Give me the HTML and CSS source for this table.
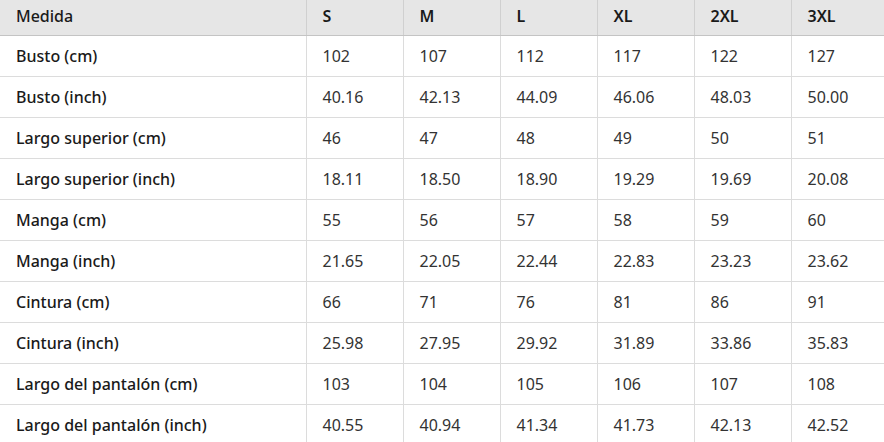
FILE: index.html
```html
<!DOCTYPE html>
<html lang="es">
<head>
<meta charset="utf-8">
<link rel="stylesheet" href="styles.css">
</head>
<body>
<table class="size-table">
  <colgroup>
    <col class="col-label">
    <col class="col-size"><col class="col-size"><col class="col-size"><col class="col-size"><col class="col-size"><col class="col-last">
  </colgroup>
  <thead>
    <tr><th class="head-label">Medida</th><th>S</th><th>M</th><th>L</th><th>XL</th><th>2XL</th><th>3XL</th></tr>
  </thead>
  <tbody>
    <tr><th>Busto (cm)</th><td>102</td><td>107</td><td>112</td><td>117</td><td>122</td><td>127</td></tr>
    <tr><th>Busto (inch)</th><td>40.16</td><td>42.13</td><td>44.09</td><td>46.06</td><td>48.03</td><td>50.00</td></tr>
    <tr><th>Largo superior (cm)</th><td>46</td><td>47</td><td>48</td><td>49</td><td>50</td><td>51</td></tr>
    <tr><th>Largo superior (inch)</th><td>18.11</td><td>18.50</td><td>18.90</td><td>19.29</td><td>19.69</td><td>20.08</td></tr>
    <tr><th>Manga (cm)</th><td>55</td><td>56</td><td>57</td><td>58</td><td>59</td><td>60</td></tr>
    <tr><th>Manga (inch)</th><td>21.65</td><td>22.05</td><td>22.44</td><td>22.83</td><td>23.23</td><td>23.62</td></tr>
    <tr><th>Cintura (cm)</th><td>66</td><td>71</td><td>76</td><td>81</td><td>86</td><td>91</td></tr>
    <tr><th>Cintura (inch)</th><td>25.98</td><td>27.95</td><td>29.92</td><td>31.89</td><td>33.86</td><td>35.83</td></tr>
    <tr><th>Largo del pantalón (cm)</th><td>103</td><td>104</td><td>105</td><td>106</td><td>107</td><td>108</td></tr>
    <tr><th>Largo del pantalón (inch)</th><td>40.55</td><td>40.94</td><td>41.34</td><td>41.73</td><td>42.13</td><td>42.52</td></tr>
  </tbody>
</table>
</body>
</html>
```
FILE: styles.css
```css
html, body {
  margin: 0;
  padding: 0;
  background: #ffffff;
  overflow: hidden;
}
.size-table {
  border-collapse: collapse;
  table-layout: fixed;
  width: 884px;
  font-family: "Noto Sans", "Open Sans", sans-serif;
  font-size: 16px;
  color: #333;
}
.col-label { width: 306px; }
.col-size { width: 97px; }
.col-last { width: 93px; }
.size-table th,
.size-table td {
  text-align: left;
  padding: 0 16px;
  height: 40px;
  border-bottom: 1px solid #dcdcdc;
  border-left: 1px solid #dcdcdc;
  white-space: nowrap;
  overflow: hidden;
}
.size-table th:first-child { border-left: none; }
.size-table thead th {
  height: 32px;
  padding-bottom: 3px;
  background: #e6e6e6;
  color: #1a1a1a;
  font-weight: 600;
  border-bottom: 1px solid #c4c4c4;
  border-left-color: #d0d0d0;
}
.size-table thead th.head-label {
  font-weight: 500;
}
.size-table tbody th {
  font-weight: 500;
  color: #1a1a1a;
}
.size-table td {
  font-weight: 400;
  color: #333;
}
```
